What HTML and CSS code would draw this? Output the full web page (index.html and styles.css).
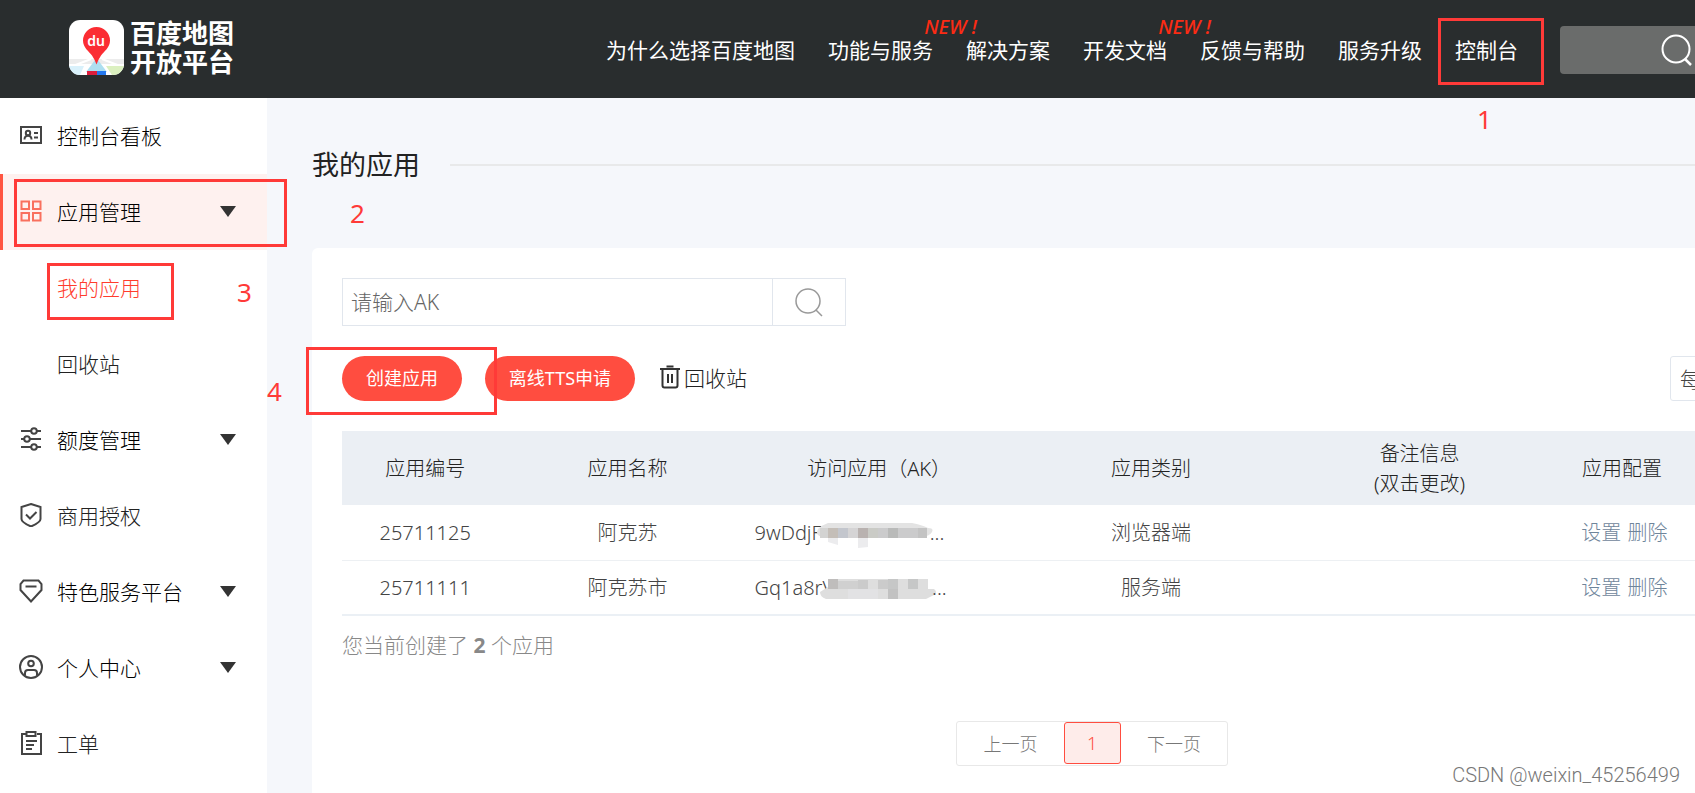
FILE: index.html
```html
<!DOCTYPE html>
<html lang="zh-CN">
<head>
<meta charset="utf-8">
<title>我的应用</title>
<link rel="stylesheet" href="styles.css">
</head>
<body>
<header class="topbar">
  <a class="brand" href="#">
    <svg class="brand-mark" viewBox="0 0 55 55" width="55" height="55" aria-hidden="true">
      <defs><clipPath id="tile"><rect width="55" height="55" rx="11"/></clipPath></defs>
      <g clip-path="url(#tile)">
        <rect width="55" height="55" fill="#fff"/>
        <path d="M0 39h55v6H0z" fill="#ececec"/>
        <path d="M22 39L4 46M33 39l18 7M0 45h55M17 45l-5 10M38 45l5 10" stroke="#fff" stroke-width="2"/>
        <path d="M0 46h15l-4 9H0z" fill="#d9f1fb"/>
        <path d="M37 46h18v9H43z" fill="#dbf0c0"/>
        <path d="M26 40h3l9 12H17z" fill="#addff0"/>
        <path d="M18 51h10v4H18z" fill="#dc1d3c"/>
        <path d="M28 51h9v4h-9z" fill="#2478f0"/>
      </g>
      <path d="M27.500 7a13.500 13.500 0 0 0-13.500 13.500c0 7 6 11 9 15 2 3 3.500 6 4.500 9 1-3 2.500-6 4.500-9 3-4 9-8 9-15A13.500 13.500 0 0 0 27.500 7z" fill="#fb2d33"/>
      <text x="27" y="26" class="pin-text">du</text>
    </svg>
    <span class="brand-name"><span>百度地图</span><span>开放平台</span></span>
  </a>
  <nav class="nav">
    <a href="#">为什么选择百度地图</a>
    <a href="#">功能与服务<em class="new">NEW !</em></a>
    <a href="#">解决方案</a>
    <a href="#">开发文档<em class="new">NEW !</em></a>
    <a href="#">反馈与帮助</a>
    <a href="#">服务升级</a>
    <a href="#">控制台</a>
  </nav>
  <button class="top-search" type="button" aria-label="搜索">
    <svg viewBox="0 0 32 32" width="32" height="32" fill="none" stroke="#fff" stroke-width="2"><circle cx="15" cy="15" r="13.500"/><path d="M24 25l6 6" stroke-width="2.500"/></svg>
  </button>
</header>

<div class="layout">
  <aside class="sidebar">
    <a class="item" href="#">
      <svg class="icon" viewBox="0 0 24 24"><rect x="2" y="4" width="20" height="16"/><circle cx="9" cy="10" r="2.200"/><path d="M5.500 16.500c0-5 7-5 7 0M15 10h4M15 14.500h4"/></svg>控制台看板
    </a>
    <a class="item active" href="#">
      <svg class="icon" viewBox="0 0 24 24"><path d="M2.500 2.500h7.500v7.500H2.500zM14 2.500h7.500v7.500H14zM2.500 14h7.500v7.500H2.500zM14 14h7.500v7.500H14z"/></svg>应用管理<i class="caret"></i>
    </a>
    <a class="item sub current" href="#">我的应用</a>
    <a class="item sub" href="#">回收站</a>
    <a class="item" href="#">
      <svg class="icon" viewBox="0 0 24 24"><path d="M2 4h10M18 4h4M2 12h3M11 12h11M2 20h10M18 20h4"/><circle cx="15" cy="4" r="2.800"/><circle cx="8" cy="12" r="2.800"/><circle cx="15" cy="20" r="2.800"/></svg>额度管理<i class="caret"></i>
    </a>
    <a class="item thin" href="#">
      <svg class="icon" viewBox="0 0 24 24"><path d="M12 1l9.500 3v12c0 3-5 5.500-9.500 7.500C7.500 21.500 2.500 19 2.500 16V4z"/><path d="M7 11.500l4 4 6.500-6.500"/></svg>商用授权
    </a>
    <a class="item" href="#">
      <svg class="icon" viewBox="0 0 24 24"><path d="M4.500 1.500h15L22.500 5v6L12 22.500 1.500 11V5zM6.500 7.500h11"/></svg>特色服务平台<i class="caret"></i>
    </a>
    <a class="item" href="#">
      <svg class="icon" viewBox="0 0 24 24"><circle cx="12" cy="12" r="11"/><circle cx="12" cy="8.500" r="2.800"/><path d="M6 20.500V18c0-2 1-3 3-3h6c2 0 3 1 3 3v2.500"/></svg>个人中心<i class="caret"></i>
    </a>
    <a class="item thin" href="#">
      <svg class="icon" viewBox="0 0 24 24"><path d="M7 3H3v20h19V3h-4M7.500 1h9v4h-9zM7 10h11M7 14h8M7 18h6"/></svg>工单
    </a>
  </aside>

  <main class="main">
    <h1 class="title">我的应用</h1>
    <section class="card">
      <form class="ak-search">
        <input type="text" placeholder="请输入AK" aria-label="请输入AK">
        <button type="button" aria-label="搜索">
          <svg viewBox="0 0 30 30" width="30" height="30" fill="none" stroke="#999" stroke-width="1.500"><circle cx="14" cy="14" r="12"/><path d="M22 23l6 6"/></svg>
        </button>
      </form>
      <div class="toolbar">
        <button class="pill" type="button">创建应用</button>
        <button class="pill" type="button">离线TTS申请</button>
        <a class="recycle" href="#">
          <svg viewBox="0 0 20 24" width="20" height="24" fill="none" stroke="#333" stroke-width="2"><path d="M0 4h20M6.500 1.500h7M2.500 4v16.500q0 2 2 2h11q2 0 2-2V4M8 9v9M12 9v9"/></svg>回收站
        </a>
        <div class="page-size"><select aria-label="每页条数"><option>每页显示30条</option></select></div>
      </div>
      <table class="apps">
        <colgroup><col class="c-id"><col class="c-name"><col class="c-ak"><col class="c-type"><col class="c-note"><col></colgroup>
        <thead>
          <tr><th>应用编号</th><th>应用名称</th><th>访问应用（AK）</th><th>应用类别</th><th>备注信息<br>(双击更改)</th><th>应用配置</th></tr>
        </thead>
        <tbody>
          <tr>
            <td>25711125</td><td>阿克苏</td>
            <td class="ak"><span class="key">9wDdjF<svg class="mosaic" viewBox="0 0 120 32" width="120" height="32"><path d="M2 12q4-4 10-6h84q10 2 16 5 6 0 4 4t-10 5H10Q-2 20 2 12z" fill="#e3e3e3"/><path d="M4 11h8v10H4z" fill="#d3d3d2"/><path d="M12 11h10v10H12z" fill="#c4beb8"/><path d="M22 11h10v10H22z" fill="#c3c6cd"/><path d="M32 11h10v10H32z" fill="#d5d4d5"/><path d="M42 11h10v10H42z" fill="#b9b2b0"/><path d="M52 11h10v10H52z" fill="#cacbc6"/><path d="M62 11h10v10H62zM82 11h20v10H82z" fill="#cbcbcc"/><path d="M72 11h10v10H72z" fill="#b9bab9"/><path d="M102 11h9v10h-9z" fill="#c3c3c3"/><path d="M12 21h10v7l-10-3zM42 21h10v9l-10 1z" fill="#ececee"/></svg>...</span></td>
            <td>浏览器端</td><td></td><td class="ops"><a href="#">设置</a> <a href="#">删除</a></td>
          </tr>
          <tr>
            <td>25711111</td><td>阿克苏市</td>
            <td class="ak"><span class="key">Gq1a8rV<svg class="mosaic wide" viewBox="0 0 120 32" width="120" height="32"><path d="M8 7h100v10h6q4 3 0 6l-8 4H6q-6-2-6-7l8-5z" fill="#dedede"/><path d="M8 7h10v10H8z" fill="#bfbdbc"/><path d="M18 9h20v8H18z" fill="#d0d0d0"/><path d="M38 8h10v9H38zM58 8h10v9H58z" fill="#cbcbcb"/><path d="M68 7h10v10H68zM88 7h10v10H88z" fill="#c6c7c7"/><path d="M68 17h10v10H68z" fill="#c2c2c2"/><path d="M28 17h30v10H28z" fill="#e2e2e4"/></svg>...</span></td>
            <td>服务端</td><td></td><td class="ops"><a href="#">设置</a> <a href="#">删除</a></td>
          </tr>
        </tbody>
      </table>
      <p class="summary">您当前创建了 <b>2</b> 个应用</p>
      <div class="pager">
        <button type="button">上一页</button><button type="button" class="on">1</button><button type="button">下一页</button>
      </div>
    </section>
  </main>
</div>

<div class="mark mark-1"></div><span class="num num-1">1</span>
<div class="mark mark-2"></div><span class="num num-2">2</span>
<div class="mark mark-3"></div><span class="num num-3">3</span>
<div class="mark mark-4"></div><span class="num num-4">4</span>
<span class="watermark">CSDN @weixin_45256499</span>
</body>
</html>
```
FILE: styles.css
```css
* { box-sizing: border-box; }
body {
  margin: 0;
  position: relative;
  min-height: 100vh;
  display: flex;
  flex-direction: column;
  overflow: hidden;
  background: #f5f7fb;
  color: #222;
  font-family: "Noto Sans", "Noto Sans CJK SC", sans-serif;
  font-size: 21px;
  font-weight: 300;
}
a { color: inherit; text-decoration: none; }
button, input, select { font: inherit; color: inherit; margin: 0; }
svg { flex: none; }

.topbar {
  display: flex;
  align-items: center;
  height: 98px;
  padding-left: 69px;
  background: #292d2e;
  color: #fff;
}
.brand { display: flex; align-items: center; gap: 6px; padding-bottom: 3px; }
.brand-name {
  display: flex;
  flex-direction: column;
  padding-bottom: 4px;
  font-family: "Noto Sans CJK SC", sans-serif;
  font-size: 26px;
  line-height: 29px;
  font-weight: 700;
}
.pin-text { fill: #fff; font-size: 14px; font-weight: 600; text-anchor: middle; }
.nav {
  display: flex;
  gap: 33px;
  margin-left: auto;
  margin-right: 42px;
  padding-top: 2px;
  white-space: nowrap;
  font-weight: 400;
}
.nav a { position: relative; line-height: 30px; }
.new {
  position: absolute;
  right: -44px;
  top: -20px;
  font-size: 20px;
  line-height: 24px;
  font-weight: 500;
  color: #fb2b14;
}
.top-search {
  display: flex;
  align-items: center;
  justify-content: flex-end;
  width: 135px;
  height: 48px;
  margin-top: 2px;
  padding: 0 2px;
  border: 0;
  border-radius: 4px 0 0 4px;
  background: #6a6c6b;
}

.layout { display: flex; flex: 1; }
.sidebar { flex: none; width: 267px; background: #fff; }
.item {
  display: flex;
  align-items: center;
  height: 76px;
  padding: 0 31px 2px 19px;
  color: #000;
}
.icon {
  width: 24px;
  height: 24px;
  margin-right: 14px;
  fill: none;
  stroke: #444;
  stroke-width: 2;
}
.active { background: #fef1ef; border-left: 3px solid #ff5440; padding-left: 16px; }
.active .icon { stroke: #f9705e; }
.sub { padding-left: 57px; color: #222; }
.thin { color: #222; }
.current { color: #ff3c2d; }
.caret {
  margin-left: auto;
  border: 8px solid transparent;
  border-top: 11px solid #333;
  border-bottom: 0;
}

.main { flex: 1; display: flex; flex-direction: column; min-width: 0; padding: 47px 0 0 45px; }
.title {
  display: flex;
  align-items: center;
  gap: 30px;
  margin: 0 0 63px;
  font-size: 27px;
  line-height: 40px;
  font-weight: 400;
}
.title::after { content: ""; flex: 1; height: 2px; background: #e8e9ea; }
.card { flex: 1; padding: 30px 0 0 30px; background: #fff; border-radius: 6px 0 0 0; }
.ak-search { display: flex; width: 504px; height: 48px; border: 1px solid #e1e6ed; }
.ak-search input { flex: 1; min-width: 0; border: 0; padding: 0 8px; outline: 0; background: none; }
.ak-search input::placeholder { color: #666; opacity: 1; }
.ak-search button {
  display: flex;
  align-items: center;
  justify-content: center;
  width: 73px;
  padding: 0;
  border: 0;
  border-left: 1px solid #e1e6ed;
  background: none;
}
.toolbar { display: flex; align-items: center; height: 45px; margin: 30px 0; }
.pill {
  height: 45px;
  width: 120px;
  padding: 0 0 3px;
  margin-right: 23px;
  border: 0;
  border-radius: 23px;
  background: #ff4d40;
  color: #fff;
  font-size: 18px;
  font-weight: 400;
}
.pill + .pill { width: 150px; }
.recycle { display: flex; align-items: center; gap: 4px; margin-left: 2px; padding-bottom: 3px; }
.page-size { width: 25px; margin-left: auto; overflow: hidden; }
.page-size select {
  display: block;
  appearance: none;
  width: 160px;
  height: 45px;
  padding: 0 9px;
  border: 1px solid #e1e6ed;
  border-radius: 3px;
  background: #fff;
  color: #444;
}

.apps { width: 100%; table-layout: fixed; border-collapse: collapse; font-size: 20px; line-height: 30px; }
.c-id { width: 12.3%; }
.c-name { width: 17.6%; }
.c-ak { width: 19.6%; }
.c-type { width: 20.6%; }
.c-note { width: 19.1%; }
.apps th { height: 74px; padding: 1px 0 0; background: #ebeff4; font-weight: 300; }
.apps td { height: 55px; padding: 2px 0 0; text-align: center; color: #444; border-bottom: 1px solid #edf0f3; }
.apps tr:last-child td { border-bottom: 2px solid #ebf0f5; }
.apps td a { color: #6f859b; }
.apps td.ak { text-align: left; padding-left: 8px; }
.apps td.ops { padding-left: 5px; }
.ops a + a { margin-left: 1px; }
.key { display: flex; align-items: center; }
.mosaic { margin: 0 -6px 0 -6px; }
.mosaic.wide { margin: 0 -8px 0 -14px; }
.summary { margin: 12px 0 59px; line-height: 34px; color: #888; }
.summary b { font-weight: 700; }
.pager {
  display: flex;
  width: 272px;
  height: 45px;
  margin-left: 45.4%;
  padding: 0 0 1px;
  border: 1px solid #e8e8e8;
  border-radius: 3px;
}
.pager button { flex: 1; padding: 0; border: 0; background: none; color: #777; font-size: 18px; }
.pager .on { flex: none; width: 57px; border: 1px solid #ff4d40; border-radius: 3px; background: #feecea; color: #ff4d40; }

.mark { position: absolute; border: 3px solid #ff3a38; }
.mark-1 { left: 1438px; top: 18px; width: 106px; height: 67px; }
.mark-2 { left: 14px; top: 179px; width: 273px; height: 68px; }
.mark-3 { left: 47px; top: 263px; width: 127px; height: 57px; }
.mark-4 { left: 306px; top: 347px; width: 191px; height: 68px; }
.num { position: absolute; color: #ff3a38; font-size: 26px; line-height: 36px; font-weight: 400; }
.num-1 { left: 1477px; top: 101px; }
.num-2 { left: 350px; top: 195px; }
.num-3 { left: 237px; top: 274px; }
.num-4 { left: 267px; top: 373px; }
.watermark {
  position: absolute;
  right: 15px;
  bottom: 6px;
  font-family: Roboto, "Liberation Sans", sans-serif;
  font-size: 20px;
  line-height: 24px;
  font-weight: 300;
  color: #777;
}
```
